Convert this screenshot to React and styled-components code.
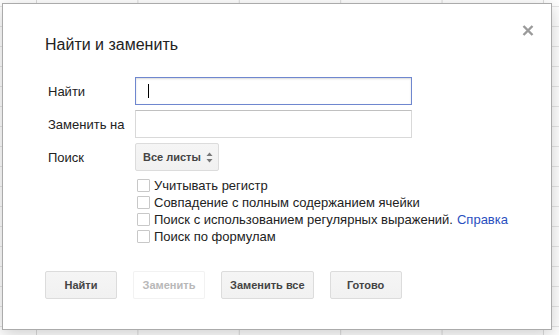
import styled, { createGlobalStyle } from "styled-components";

const GlobalStyle = createGlobalStyle`
  html, body {
    margin: 0;
    padding: 0;
  }
  body {
    font-family: "Liberation Sans", Arial, sans-serif;
    background-color: #fff;
    background-image:
      linear-gradient(to right, #dcdcdc 1px, transparent 1px),
      linear-gradient(to bottom, #e6e6e6 1px, transparent 1px);
    background-size: 101.4px 100%, 100% 20px;
    background-position: 36px 0, 0 6px;
  }
`;

const Page = styled.div`
  width: 559px;
  height: 335px;
  padding: 3px 0 0 2px;
  box-sizing: border-box;
  overflow: hidden;
`;

const Dialog = styled.div`
  position: relative;
  width: 550px;
  height: 327px;
  box-sizing: border-box;
  background: #fff;
  border: 1px solid rgba(0, 0, 0, 0.33);
  box-shadow: 0 4px 16px rgba(0, 0, 0, 0.2);
  padding: 31px 42px 30px;
  display: flex;
  flex-direction: column;
  color: #222;
`;

const CloseButton = styled.button`
  position: absolute;
  top: 20px;
  right: 16px;
  width: 14px;
  height: 13px;
  padding: 0;
  border: none;
  background: none;
  cursor: pointer;
  display: flex;
  align-items: center;
  justify-content: center;
`;

const Title = styled.div`
  font-size: 16px;
  line-height: 20px;
  color: #222;
`;

const Form = styled.div`
  margin-top: 22px;
  display: grid;
  grid-template-columns: 90px 277px;
  grid-auto-rows: 28px;
  row-gap: 5px;
  align-items: center;
`;

const Label = styled.label`
  font-size: 13px;
  padding-left: 3px;
  color: #222;
`;

const TextInput = styled.div`
  position: relative;
  height: 28px;
  box-sizing: border-box;
  border: 1px solid ${(p) => (p.$focused ? "#6f87cf" : "#d9d9d9")};
  border-top-color: ${(p) => (p.$focused ? "#6f87cf" : "#c0c0c0")};
  box-shadow: ${(p) =>
    p.$focused ? "inset 0 1px 2px rgba(0,0,0,0.15)" : "none"};
  background: #fff;
`;

const Caret = styled.span`
  position: absolute;
  left: 12px;
  top: 6px;
  width: 1px;
  height: 14px;
  background: #000;
`;

const Select = styled.div`
  width: 84px;
  height: 28px;
  box-sizing: border-box;
  border: 1px solid #dcdcdc;
  border-radius: 2px;
  background: linear-gradient(#f5f5f5, #f1f1f1);
  display: flex;
  align-items: center;
  justify-content: space-between;
  padding: 0 5px 0 7px;
  font-size: 11px;
  font-weight: bold;
  color: #444;
`;

const Options = styled.div`
  margin-top: 6px;
  padding-left: 92px;
  display: flex;
  flex-direction: column;
`;

const Option = styled.label`
  height: 17px;
  display: flex;
  align-items: center;
  gap: 4px;
  font-size: 13px;
  color: #222;
`;

const Box = styled.span`
  width: 13px;
  height: 13px;
  box-sizing: border-box;
  border: 1px solid #c8c8c8;
  border-radius: 1px;
  background: #fff;
  flex-shrink: 0;
`;

const Link = styled.a`
  color: #2a4fc0;
  text-decoration: none;
  margin-left: 4px;
`;

const Footer = styled.div`
  margin-top: auto;
  display: flex;
  gap: 16px;
`;

const Button = styled.button`
  min-width: 72px;
  height: 28px;
  box-sizing: border-box;
  padding: 0 8px;
  border-radius: 2px;
  font-family: inherit;
  font-size: 11px;
  font-weight: bold;
  border: 1px solid ${(p) => (p.disabled ? "rgba(0,0,0,0.05)" : "#dcdcdc")};
  background: ${(p) =>
    p.disabled ? "#fff" : "linear-gradient(#f5f5f5, #f1f1f1)"};
  color: ${(p) => (p.disabled ? "#b8b8b8" : "#444")};
  cursor: ${(p) => (p.disabled ? "default" : "pointer")};
`;

const options = [
  "Учитывать регистр",
  "Совпадение с полным содержанием ячейки",
  "Поиск с использованием регулярных выражений.",
  "Поиск по формулам",
];

const App = () => {
  return (
    <>
      <GlobalStyle />
      <Page>
        <Dialog>
          <CloseButton aria-label="Закрыть">
            <svg width="12" height="11" viewBox="0 0 12 11">
              <path
                d="M1.5 1 L10.5 10 M10.5 1 L1.5 10"
                stroke="#9a9a9a"
                strokeWidth="2.4"
                strokeLinecap="butt"
              />
            </svg>
          </CloseButton>
          <Title>Найти и заменить</Title>
          <Form>
            <Label>Найти</Label>
            <TextInput $focused>
              <Caret />
            </TextInput>
            <Label>Заменить на</Label>
            <TextInput />
            <Label>Поиск</Label>
            <Select>
              Все листы
              <svg width="7" height="11" viewBox="0 0 7 11">
                <path d="M3.5 0.5 L6.5 4 L0.5 4 Z" fill="#777" />
                <path d="M3.5 10.5 L6.5 7 L0.5 7 Z" fill="#777" />
              </svg>
            </Select>
          </Form>
          <Options>
            {options.map((text, i) => (
              <Option key={text}>
                <Box />
                <span>
                  {text}
                  {i === 2 && <Link href="#">Справка</Link>}
                </span>
              </Option>
            ))}
          </Options>
          <Footer>
            <Button>Найти</Button>
            <Button disabled>Заменить</Button>
            <Button>Заменить все</Button>
            <Button>Готово</Button>
          </Footer>
        </Dialog>
      </Page>
    </>
  );
};

export default App;
